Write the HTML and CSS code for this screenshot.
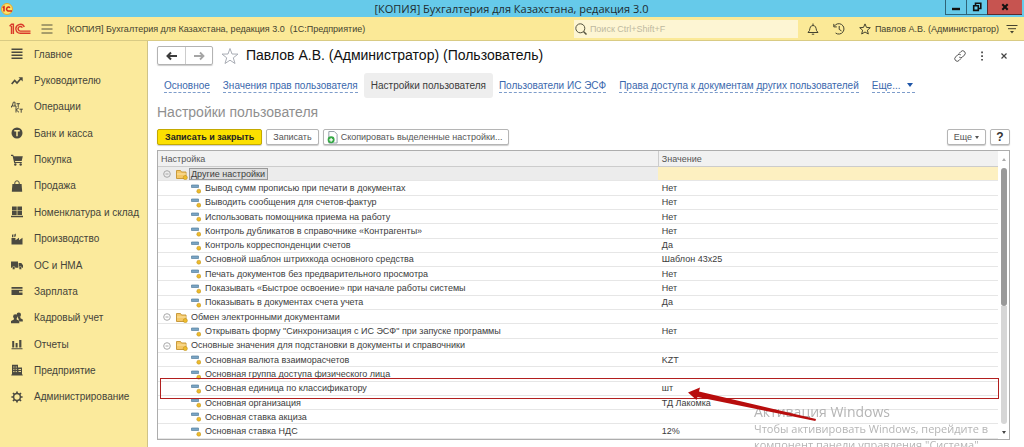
FILE: index.html
```html
<!DOCTYPE html>
<html lang="ru">
<head>
    <meta charset="UTF-8">
    <meta name="viewport" content="width=device-width, initial-scale=1.0">
    <title>[КОПИЯ] Бухгалтерия для Казахстана, редакция 3.0</title>
    <link rel="stylesheet" href="styles.css">
</head>
<body>
    <header class="titlebar">
        <svg class="app-icon" viewBox="0 0 12 12">
            <circle cx="6" cy="6" r="5.5" fill="#fbe36a" stroke="#e9a92f"/>
            <path d="M1.6 4.6 3 3.8V8.4M9 4.7A2 2 0 1 0 7 8h4" fill="none" stroke="#d5281b" stroke-width="1.5"/>
        </svg>
        <div class="window-title">[КОПИЯ] Бухгалтерия для Казахстана, редакция 3.0</div>
        <div class="window-buttons">
            <button class="win-min" aria-label="Свернуть"><svg viewBox="0 0 10 10"><path d="M1 7h8" stroke="#111" stroke-width="2.4"/></svg></button>
            <button class="win-max" aria-label="Развернуть"><svg viewBox="0 0 10 10"><path d="M3.5 3V1.2h5.300v5.300H7M1.700 3.800h4.600v4.600H1.700z" fill="none" stroke="#111" stroke-width="1.6"/></svg></button>
            <button class="win-close" aria-label="Закрыть"><svg viewBox="0 0 10 10"><path d="M2.300 2.200l5.400 5.600M7.700 2.200L2.300 7.800" stroke="#111" stroke-width="2"/></svg></button>
        </div>
    </header>

    <div class="appbar">
        <svg class="logo" viewBox="0 0 22 12">
            <path d="M.6 3.300 2.600 1.200H4.400V11M2.500 3V11M15.300 4A4.400 4.400 0 1 0 11.400 10.200H21.500M13.400 4.600A2.300 2.300 0 1 0 11.500 8.100H21.500" fill="none" stroke="#d93a2b" stroke-width="1.4"/>
        </svg>
        <button class="icon-button menu-button" aria-label="Меню">
            <svg viewBox="0 0 12 12"><path d="M.5 2h11M.5 6h11M.5 10h11" stroke="#55533f"/></svg>
        </button>
        <div class="app-name">[КОПИЯ] Бухгалтерия для Казахстана, редакция 3.0&nbsp; (1С:Предприятие)</div>
        <label class="search">
            <svg viewBox="0 0 12 12" fill="none" stroke="#55533f"><circle cx="5.300" cy="5.300" r="4.500"/><path d="M8.500 8.500l3 3" stroke-width="1.500"/></svg>
            <input type="search" placeholder="Поиск Ctrl+Shift+F" aria-label="Поиск">
        </label>
        <div class="app-tools">
            <button class="icon-button" aria-label="Уведомления"><svg viewBox="0 0 12 12" fill="none" stroke="#45432f"><path d="M1 9.500h10L9.500 7.500C9 4.500 8.500 2.500 6 2.500S3 4.500 2.500 7.500zM4.800 11.200h2.400M6 .5v2"/></svg></button>
            <button class="icon-button" aria-label="История"><svg viewBox="0 0 12 12" fill="none" stroke="#45432f"><path d="M1.300 3.200A5.200 5.200 0 1 1 2.600 10M.8.9v3h3M6.200 3v3.400l2.300 1.500"/></svg></button>
            <button class="icon-button" aria-label="Избранное"><svg viewBox="0 0 12 12" fill="none" stroke="#45432f"><path d="M6 .9l1.500 3.500 3.800.3-2.900 2.500.9 3.800L6 9l-3.300 2 .9-3.800L.7 4.700l3.800-.3z"/></svg></button>
        </div>
        <a class="user" href="#">Павлов А.В. (Администратор)</a>
        <button class="icon-button panel-button" aria-label="Настройка панели">
            <svg viewBox="0 0 12 12"><path d="M.5 2.500h11M2 5.700h8" stroke="#45432f"/><path d="M4 8h4L6 10.500z" fill="#45432f"/></svg>
        </button>
    </div>

    <div class="workspace">
        <nav class="sidebar">
            <a href="#"><svg viewBox="0 0 12 12"><path d="M.5 1.200h11M.5 4.200h11M.5 7.200h11M.5 10.200h11" stroke="#4b4a40" stroke-width="1.600"/></svg>Главное</a>
            <a href="#"><svg viewBox="0 0 12 12"><path d="M.7 9l3-3.500L6 8l4-4.500" fill="none" stroke="#4b4a40" stroke-width="1.700"/><path d="M7.500 2.300H11.700V6.500z" fill="#4b4a40"/></svg>Руководителю</a>
            <a href="#"><svg viewBox="0 0 12 12" fill="none" stroke="#4b4a40"><path d="M.5 6.500V5h4.500v1.500M1.300 5l1-3.800H4V5M5.500 2.700h3.400M7.200 2.700V6M5 6.500v5M8 6.600l-2.800 2.300L8 11.300M8.600 8.200h3.200M10.200 8.200v3.500"/></svg>Операции</a>
            <a href="#"><svg viewBox="0 0 12 12"><circle cx="6" cy="6" r="5.500" fill="#4b4a40"/><path d="M3.300 3.800h5.400M6 3.800v5.500" stroke="#fbea9c" stroke-width="1.500"/></svg>Банк и касса</a>
            <a href="#"><svg viewBox="0 0 12 12"><path d="M0 .8h2.200l.5 1.400h9.100L10.700 7H4l.2 1h6.600v1H3.200L1.600 2H0z" fill="#4b4a40"/><circle cx="4.300" cy="10.500" r="1.200" fill="#4b4a40"/><circle cx="9.700" cy="10.500" r="1.200" fill="#4b4a40"/></svg>Покупка</a>
            <a href="#"><svg viewBox="0 0 12 12"><path d="M1.400 4h9.200l.6 7.700H.8z" fill="#4b4a40"/><path d="M3.800 6V3a2.200 2.200 0 0 1 4.400 0v3" fill="none" stroke="#4b4a40"/></svg>Продажа</a>
            <a href="#"><svg viewBox="0 0 12 12" fill="#4b4a40"><path d="M1 .5h4.700v4H1zM6.400.5H11v4H6.400zM1 5.100h4.700V9H1zM6.400 5.100H11V9H6.400zM0 9.800h12v1.500H0z"/></svg>Номенклатура и склад</a>
            <a href="#"><svg viewBox="0 0 12 12" fill="#4b4a40"><path d="M.5 11.500V5h4v2.300L8 4.800v2.500l3.500-2.500v6.700zM1 1.800l1.400-.6V4.200H1zM3.300 1.600l1.500-1v2.600l-1.500 1z"/></svg>Производство</a>
            <a href="#"><svg viewBox="0 0 12 12" fill="#4b4a40"><path d="M0 2.500h7v6.300H0zM7.600 4h2.700L12 6.300v2.500H7.600z"/><circle cx="2.700" cy="9" r="1.500" stroke="#fbea9c" stroke-width=".5"/><circle cx="9.300" cy="9" r="1.500" stroke="#fbea9c" stroke-width=".5"/></svg>ОС и НМА</a>
            <a href="#"><svg viewBox="0 0 12 12" fill="#4b4a40"><path d="M.5 2h11v1.800H.5zM.5 4.700h11v1.500H8v1.300h3.500V10H.5z"/></svg>Зарплата</a>
            <a href="#"><svg viewBox="0 0 12 12" fill="#4b4a40"><circle cx="7.800" cy="2.700" r="2.200"/><path d="M6.500 4.500h2.700l.3 1.700 2.300 1.200V9.500H8.500z"/><circle cx="4.300" cy="4.500" r="2.200"/><path d="M3.200 6h2.300l.2 1.600 2.600 1.200v2.500H0V8.900l2.900-1.300z"/></svg>Кадровый учет</a>
            <a href="#"><svg viewBox="0 0 12 12" fill="#4b4a40"><path d="M1.200 3h2v6.500h-2zM4.600 5h2v4.500h-2zM8.200 2h2.200v7.500H8.200zM.5 10.200h11v1H.5z"/></svg>Отчеты</a>
            <a href="#"><svg viewBox="0 0 12 12"><path d="M1 .8h6v10H1zM7 3.500h4v7.300H7zM.3 10.500h11.400v1H.3z" fill="#4b4a40"/><path d="M2.200 3h1.300M4.600 3h1.300M2.200 5.300h1.300M4.600 5.300h1.300M2.200 7.600h1.300M4.600 7.600h1.300M7.500 5.500h2.500M7.500 7.500h2.500" stroke="#fbea9c" stroke-width=".9"/></svg>Предприятие</a>
            <a href="#"><svg viewBox="0 0 12 12" fill="none" stroke="#4b4a40"><circle cx="6" cy="6" r="3.400" stroke-width="1.500"/><path d="M6 .4v2M6 9.600v2M.4 6h2M9.600 6h2M2 2l1.400 1.400M8.600 8.600L10 10M2 10l1.400-1.400M8.600 3.400L10 2" stroke-width="1.700"/></svg>Администрирование</a>
        </nav>

        <main class="content">
            <div class="form-header">
                <div class="history-buttons">
                    <button aria-label="Назад"><svg viewBox="0 0 12 10"><path d="M1.500 5H11M5 1.500L1.500 5 5 8.500" fill="none" stroke="#3c3c3c" stroke-width="2"/></svg></button>
                    <button aria-label="Вперед"><svg viewBox="0 0 12 10"><path d="M1 5h9.500M7 1.500L10.500 5 7 8.500" fill="none" stroke="#a5a5a5" stroke-width="1.800"/></svg></button>
                </div>
                <button class="icon-button star" aria-label="В избранное"><svg viewBox="0 0 18 18" fill="none" stroke="#a9adb5"><path d="M9 1.500l2 5.500 6 .1-4.700 3.700 1.700 5.700L9 13.200l-5 3.300 1.700-5.700L1 7.100 7 7z"/></svg></button>
                <h1>Павлов А.В. (Администратор) (Пользователь)</h1>
                <div class="form-tools">
                    <button class="icon-button" aria-label="Ссылка"><svg viewBox="0 0 12 12" fill="none" stroke="#555"><path d="M5 3.500l2-2a2.400 2.400 0 0 1 3.500 3.500l-2 2a2.400 2.400 0 0 1-3.300.1M7 8.500l-2 2A2.400 2.400 0 0 1 1.500 7l2-2a2.400 2.400 0 0 1 3.300-.1"/></svg></button>
                    <button class="icon-button" aria-label="Еще"><svg viewBox="0 0 12 12" fill="#444"><path d="M5.200 1.500h1.700v1.700H5.200zM5.200 5.200h1.700v1.700H5.200zM5.200 8.900h1.700v1.700H5.200z"/></svg></button>
                    <button class="icon-button" aria-label="Закрыть"><svg viewBox="0 0 12 12"><path d="M3.500 3.500l5 5M8.500 3.500l-5 5" stroke="#444" stroke-width="1.200"/></svg></button>
                </div>
            </div>

            <nav class="tabs">
                <a href="#">Основное</a>
                <a href="#">Значения прав пользователя</a>
                <a class="active" href="#">Настройки пользователя</a>
                <a href="#">Пользователи ИС ЭСФ</a>
                <a href="#">Права доступа к документам других пользователей</a>
                <a class="more" href="#">Еще...</a>
            </nav>

            <h2>Настройки пользователя</h2>

            <div class="toolbar">
                <button class="btn primary">Записать и закрыть</button>
                <button class="btn">Записать</button>
                <button class="btn copy">
                    <svg viewBox="0 0 12 14"><path d="M2 .5h6L11 3.500V13H2z" fill="#fff" stroke="#8b97a1"/><circle cx="4.500" cy="9.500" r="3.800" fill="#35a845"/><path d="M2.500 9.500h4M4.500 7.500v4" stroke="#fff" stroke-width="1.300"/></svg>
                    Скопировать выделенные настройки...
                </button>
                <button class="btn more-button">Еще</button>
                <button class="btn help">?</button>
            </div>

            <div class="grid">
                <table>
                    <thead>
                        <tr><th>Настройка</th><th>Значение</th></tr>
                    </thead>
                    <tbody>
                        <tr class="group selected"><td><span>Другие настройки</span></td><td></td></tr>
                        <tr><td>Вывод сумм прописью при печати в документах</td><td>Нет</td></tr>
                        <tr><td>Выводить сообщения для счетов-фактур</td><td>Нет</td></tr>
                        <tr><td>Использовать помощника приема на работу</td><td>Нет</td></tr>
                        <tr><td>Контроль дубликатов в справочнике «Контрагенты»</td><td>Нет</td></tr>
                        <tr><td>Контроль корреспонденции счетов</td><td>Да</td></tr>
                        <tr><td>Основной шаблон штрихкода основного средства</td><td>Шаблон 43x25</td></tr>
                        <tr><td>Печать документов без предварительного просмотра</td><td>Нет</td></tr>
                        <tr><td>Показывать «Быстрое освоение» при начале работы системы</td><td>Нет</td></tr>
                        <tr><td>Показывать в документах счета учета</td><td>Да</td></tr>
                        <tr class="group"><td><span>Обмен электронными документами</span></td><td></td></tr>
                        <tr><td>Открывать форму "Синхронизация с ИС ЭСФ" при запуске программы</td><td>Нет</td></tr>
                        <tr class="group"><td><span>Основные значения для подстановки в документы и справочники</span></td><td></td></tr>
                        <tr><td>Основная валюта взаиморасчетов</td><td>KZT</td></tr>
                        <tr><td>Основная группа доступа физического лица</td><td></td></tr>
                        <tr class="marked"><td>Основная единица по классификатору</td><td>шт
                            <svg class="arrow" viewBox="0 0 128 34"><path d="M0 5.500L12 .5L11 4.500L128 32L127.400 34L9.500 10L8.500 13z" fill="#b80d0d"/></svg></td></tr>
                        <tr><td>Основная организация</td><td>ТД Лакомка</td></tr>
                        <tr><td>Основная ставка акциза</td><td></td></tr>
                        <tr><td>Основная ставка НДС</td><td>12%</td></tr>
                    </tbody>
                </table>
                <div class="scrollbar"><i class="up"></i><i class="thumb"></i><i class="track"></i><i class="down"></i></div>
            </div>
        </main>
    </div>

    <div class="watermark">
        <p class="watermark-title">Активация Windows</p>
        <p>Чтобы активировать Windows, перейдите в<br>компонент панели управления "Система".</p>
    </div>

    <script>
        // иконки строк дерева: папка с кнопкой сворачивания или элемент
        const folder = '<svg class="toggle" viewBox="0 0 8 8" fill="none" stroke="#a8a8a8"><circle cx="4" cy="4" r="3.300"/><path d="M2.500 4h3"/></svg>' +
            '<svg class="folder" viewBox="0 0 12 11"><path d="M.5 9.500v-8h4l1 1.500h4.500v6.500z" fill="#f5c867" stroke="#c89a3d"/><path d="M1 5h9" stroke="#fbe3a5"/><circle cx="9.300" cy="8.600" r="2.100" fill="#eebb2b" stroke="#b98c1c" stroke-width=".5"/></svg>';
        const item = '<svg class="item" viewBox="0 0 10 10"><path d="M.5 1h7v2.500h-7z" fill="#7aa5c4" stroke="#54809f" stroke-width=".7"/><circle cx="7.800" cy="7.200" r="2" fill="#eebb2b" stroke="#b98c1c" stroke-width=".5"/></svg>';

        document.querySelectorAll('tbody tr').forEach(function(row) {
            const icons = row.classList.contains('group') ? folder : item;
            row.cells[0].insertAdjacentHTML('afterbegin', icons);
        });
    </script>
</body>
</html>
```
FILE: styles.css
```css
* {
    margin: 0;
    padding: 0;
    box-sizing: border-box;
}

body {
    font-family: 'Liberation Sans', Arial, sans-serif;
    font-size: 9px;
    color: #3c3c3c;
    background-color: #fff;
    display: flex;
    flex-direction: column;
    min-height: 100vh;
    overflow-x: hidden;
}

button {
    font: inherit;
    color: inherit;
    border: none;
    background: none;
    cursor: pointer;
}

a {
    color: inherit;
    text-decoration: none;
}

svg {
    display: block;
    flex: none;
}

.titlebar {
    display: flex;
    align-items: center;
    height: 17px;
    padding-left: 1px;
    background-color: #66caea;
}

.app-icon {
    width: 12px;
    height: 12px;
}

.window-title {
    flex: 1;
    padding-left: 65px;
    text-align: center;
    font-family: 'Open Sans', 'Noto Sans', sans-serif;
    font-size: 11px;
    line-height: 17px;
    color: #1d2a30;
}

.window-buttons {
    display: flex;
    align-self: stretch;
    padding: 0 2px 2px 0;
}

.window-buttons button {
    display: flex;
    align-items: center;
    justify-content: center;
    width: 21px;
    border: 1px solid #2f6479;
    border-top: none;
    border-right: none;
}

.window-buttons svg {
    width: 10px;
    height: 10px;
}

.window-buttons .win-close {
    width: 35px;
    background-color: #c75450;
    border-color: #5b2a2c;
}

.appbar {
    display: flex;
    align-items: center;
    height: 24px;
    padding: 0 6px 0 9px;
    background-color: #fbe997;
    border-bottom: 1px solid #d9cb84;
    color: #45432f;
}

.logo {
    width: 22px;
    height: 12px;
}

.icon-button {
    display: flex;
    flex: none;
}

.icon-button svg {
    width: 12px;
    height: 12px;
}

.menu-button {
    margin-left: 10px;
}

.app-name {
    flex: 1;
    margin-left: 14px;
    white-space: nowrap;
}

.search {
    display: flex;
    align-items: center;
    gap: 3px;
    width: 224px;
    height: 18px;
    padding-left: 1px;
    background-color: #fdf5d3;
}

.search svg {
    width: 12px;
    height: 12px;
}

.search input {
    flex: 1;
    min-width: 0;
    border: none;
    outline: none;
    background: none;
    font: inherit;
}

.search input::placeholder {
    color: #bdb99f;
}

.app-tools {
    display: flex;
    gap: 14px;
    margin: 0 4px 0 9px;
}

.panel-button {
    margin-left: 7px;
}

.workspace {
    flex: 1;
    display: flex;
}

.sidebar {
    display: flex;
    flex-direction: column;
    width: 148px;
    padding-bottom: 37px;
    background-color: #fbea9c;
    border-right: 1px solid #cfc388;
    font-size: 10px;
    color: #45443a;
}

.sidebar a {
    flex: 1;
    display: flex;
    align-items: center;
    gap: 11px;
    min-height: 26px;
    padding-left: 11px;
    white-space: nowrap;
}

.sidebar svg {
    width: 12px;
    height: 12px;
}

.content {
    flex: 1;
    min-width: 0;
    display: flex;
    flex-direction: column;
    padding: 5px 14px 7px 9px;
}

.form-header {
    display: flex;
    align-items: center;
    height: 19px;
}

.history-buttons {
    display: flex;
    height: 19px;
    border: 1px solid #b3b3b3;
    border-radius: 2px;
    box-shadow: 0 1px 1px #ccc;
}

.history-buttons button {
    display: flex;
    align-items: center;
    justify-content: center;
    width: 27px;
}

.history-buttons button + button {
    border-left: 1px solid #ccc;
}

.history-buttons svg {
    width: 12px;
    height: 10px;
}

.star {
    margin: 0 7px 0 8px;
}

.star svg {
    width: 18px;
    height: 18px;
}

h1 {
    flex: 1;
    font-size: 14px;
    font-weight: normal;
    line-height: 19px;
    color: #111;
    white-space: nowrap;
}

.form-tools {
    display: flex;
    gap: 10px;
}

.tabs {
    display: flex;
    align-items: center;
    height: 25px;
    margin-top: 8px;
    padding-left: 7px;
    gap: 13px;
    font-size: 10px;
    line-height: 13px;
    color: #3a68ad;
    white-space: nowrap;
}

.tabs a {
    border-bottom: 1px dashed #7d9cca;
}

.tabs .active {
    padding: 6px 7px;
    margin: 0 -7px;
    border: none;
    border-radius: 3px;
    background-color: #eee;
    color: #3c3c3c;
}

.tabs .more::after {
    content: '';
    display: inline-block;
    margin: 0 2px 2px 7px;
    border: 3px solid transparent;
    border-top: 4px solid #1f56a8;
    border-bottom: none;
}

h2 {
    margin-top: 5px;
    font-size: 14px;
    font-weight: normal;
    line-height: 18px;
    color: #8f8f8f;
}

.toolbar {
    display: flex;
    gap: 4px;
    margin-top: 8px;
}

.btn {
    display: flex;
    align-items: center;
    justify-content: center;
    gap: 3px;
    height: 16px;
    padding: 0 6px;
    border: 1px solid #b5b5b5;
    border-radius: 2px;
    box-shadow: 0 1px 1px #ccc;
    background-color: #fff;
    color: #555;
    white-space: nowrap;
}

.primary {
    padding: 0 7px;
    border-color: #c4a900;
    background-color: #fce000;
    font-weight: bold;
    color: #222;
}

.copy {
    padding-left: 3px;
}

.copy svg {
    width: 11px;
    height: 13px;
}

.more-button {
    margin-left: auto;
}

.more-button::after {
    content: '';
    border: 2px solid transparent;
    border-top: 3px solid #555;
    border-bottom: none;
}

.help {
    width: 20px;
    padding: 0;
    font-size: 12px;
    font-weight: bold;
    color: #333;
}

.grid {
    flex: 1;
    display: flex;
    margin-top: 5px;
    border: 1px solid #adadad;
}

table {
    flex: 1;
    border-collapse: separate;
    border-spacing: 0;
    table-layout: fixed;
    line-height: 12px;
    white-space: nowrap;
}

th {
    width: 59.5%;
    height: 16px;
    padding-left: 3px;
    background-color: #f1f1f1;
    border-bottom: 1px solid #ccc;
    font-weight: normal;
    text-align: left;
    color: #555;
}

th + th {
    width: 40.5%;
    border-left: 1px solid #ccc;
}

td {
    border-bottom: 1px solid #e6e6e6;
    vertical-align: middle;
}

td:first-child {
    padding-left: 33px;
}

td + td {
    padding-left: 4px;
}

td svg {
    display: inline-block;
    vertical-align: middle;
}

.item {
    width: 10px;
    height: 10px;
    margin-right: 4px;
}

tr.group td:first-child {
    padding-left: 5px;
}

.toggle {
    width: 8px;
    height: 8px;
    margin-right: 5px;
}

.folder {
    width: 12px;
    height: 11px;
    margin-right: 3px;
}

.selected td {
    background-color: #ececec;
}

.selected td + td {
    background-color: #fdf0c1;
}

.selected span {
    display: inline-block;
    padding: 0 3px 0 2px;
    margin-left: -2px;
    outline: 1px solid #999;
    outline-offset: -1px;
    background-color: #ddd;
}

.marked {
    position: relative;
}

.marked::after {
    content: '';
    position: absolute;
    inset: -4px -1px -3px 2px;
    border: 1px solid #b21f1f;
}

.marked td + td {
    position: relative;
}

.arrow {
    position: absolute;
    z-index: 2;
    left: 30px;
    top: 5px;
    width: 128px;
    height: 34px;
}

.scrollbar {
    display: flex;
    flex-direction: column;
    align-items: center;
    width: 11px;
    padding: 7px 0 5px;
    gap: 7px;
}

.scrollbar .up {
    border: 2px solid transparent;
    border-bottom: 3px solid #aaa;
    border-top: none;
}

.scrollbar .down {
    border: 2px solid transparent;
    border-top: 3px solid #444;
    border-bottom: none;
}

.scrollbar .thumb {
    flex: 137;
    width: 6px;
    border-radius: 3px;
    background-color: #999;
}

.scrollbar .track {
    flex: 118;
    width: 6px;
    margin-top: -7px;
    border-radius: 0 0 3px 3px;
    background-color: #d6d6d6;
}

.watermark {
    position: fixed;
    left: 754px;
    bottom: -6px;
    font-family: 'Open Sans', 'Noto Sans', sans-serif;
    font-size: 11px;
    line-height: 16px;
    color: #b5b5b5;
    white-space: nowrap;
    pointer-events: none;
}

.watermark-title {
    font-size: 14px;
    line-height: 18px;
}
```
